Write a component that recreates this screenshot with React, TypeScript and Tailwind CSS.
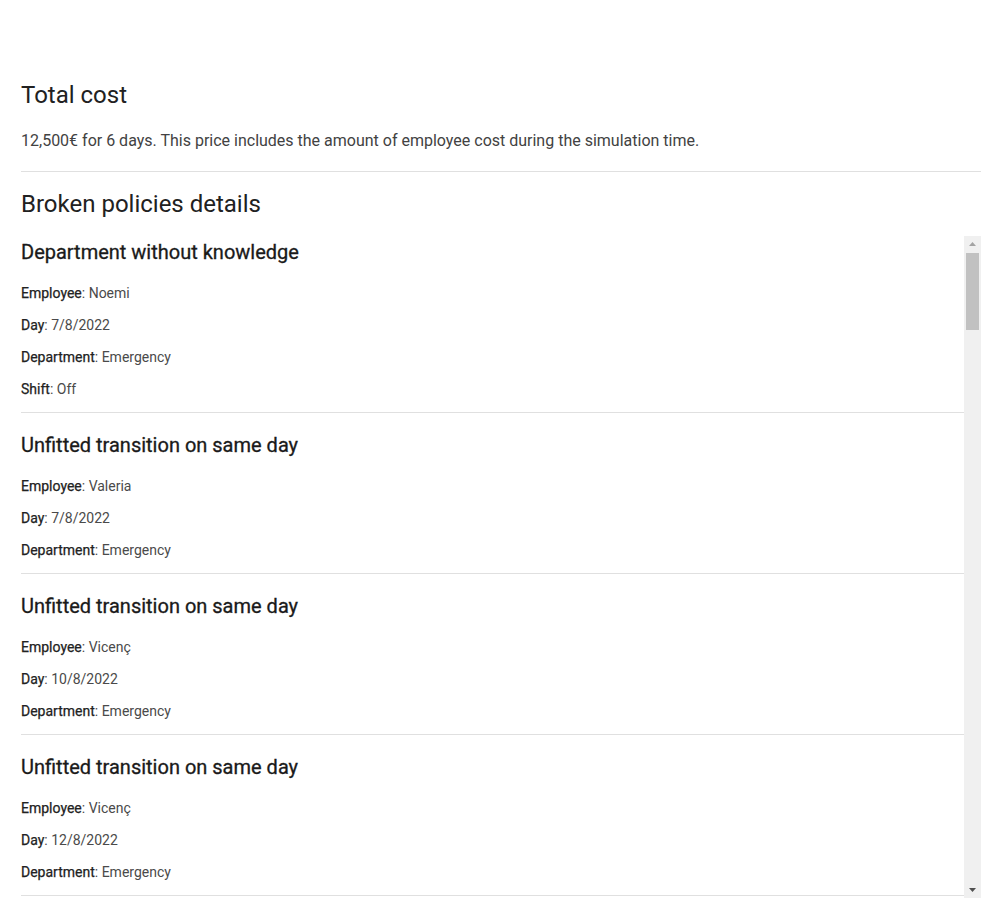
import React from "react";

interface Policy {
  title: string;
  fields: [string, string][];
}

const POLICIES: Policy[] = [
  {
    title: "Department without knowledge",
    fields: [
      ["Employee", "Noemi"],
      ["Day", "7/8/2022"],
      ["Department", "Emergency"],
      ["Shift", "Off"],
    ],
  },
  {
    title: "Unfitted transition on same day",
    fields: [
      ["Employee", "Valeria"],
      ["Day", "7/8/2022"],
      ["Department", "Emergency"],
    ],
  },
  {
    title: "Unfitted transition on same day",
    fields: [
      ["Employee", "Vicenç"],
      ["Day", "10/8/2022"],
      ["Department", "Emergency"],
    ],
  },
  {
    title: "Unfitted transition on same day",
    fields: [
      ["Employee", "Vicenç"],
      ["Day", "12/8/2022"],
      ["Department", "Emergency"],
    ],
  },
];

function PolicyItem({ policy, first }: { policy: Policy; first: boolean }) {
  return (
    <div className={`border-b border-[#e0e0e0] pb-[13px] ${first ? "pt-[4px]" : "pt-[20px]"}`}>
      <h3 className="text-[20px] leading-[24px] font-normal text-[#1a1a1a] [-webkit-text-stroke:0.3px_#1a1a1a]">
        {policy.title}
      </h3>
      <div className="mt-[19px] flex flex-col gap-[12px]">
        {policy.fields.map(([label, value]) => (
          <p key={label} className="text-[14px] leading-[20px] text-[#4a4a4a]">
            <span className="text-[#222] [-webkit-text-stroke:0.25px_#222]">{label}</span>: {value}
          </p>
        ))}
      </div>
    </div>
  );
}

// fake classic scrollbar, as in the screenshot
function Scrollbar() {
  return (
    <div className="w-[17px] shrink-0 flex flex-col bg-[#f0f0f0]">
      <div className="h-[16px] flex items-center justify-center">
        <svg width="7" height="4" viewBox="0 0 7 4">
          <path d="M3.5 0L7 4H0z" fill="#a3a3a3" />
        </svg>
      </div>
      <div className="mx-[2px] mt-[1px] h-[77px] bg-[#c1c1c1]" />
      <div className="flex-1" />
      <div className="h-[16px] flex items-center justify-center">
        <svg width="7" height="4" viewBox="0 0 7 4">
          <path d="M0 0H7L3.5 4z" fill="#505050" />
        </svg>
      </div>
    </div>
  );
}

export default function App() {
  return (
    <div
      className="w-[1004px] h-[908px] bg-white overflow-hidden pl-[21px] pr-[23px] pt-[80px]"
      style={{ fontFamily: "Roboto, 'Liberation Sans', sans-serif" }}
    >
      <h2 className="text-[24px] leading-[30px] text-[#212121]">Total cost</h2>
      <p className="mt-[21px] text-[16px] leading-[20px] text-[#424242]">
        12,500€ for 6 days. This price includes the amount of employee cost during the simulation time.
      </p>
      <div className="mt-[20px] border-t border-[#e0e0e0]" />
      <h2 className="mt-[17px] text-[24px] leading-[30px] text-[#212121]">Broken policies details</h2>
      <div className="mt-[17px] h-[662px] flex">
        <div className="flex-1 overflow-hidden">
          {POLICIES.map((p, i) => (
            <PolicyItem key={i} policy={p} first={i === 0} />
          ))}
        </div>
        <Scrollbar />
      </div>
    </div>
  );
}
